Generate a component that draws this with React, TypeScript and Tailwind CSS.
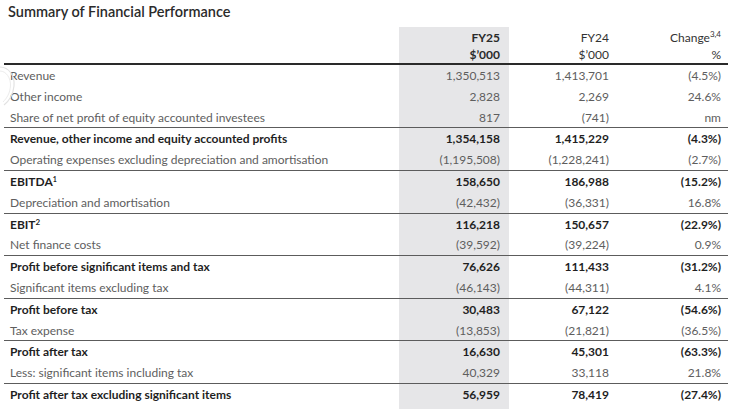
type Row = {
  label: React.ReactNode
  fy25: string
  fy24: string
  change: string
  bold?: boolean
  line?: boolean
}

const rows: Row[] = [
  { label: 'Revenue', fy25: '1,350,513', fy24: '1,413,701', change: '(4.5%)' },
  { label: 'Other income', fy25: '2,828', fy24: '2,269', change: '24.6%' },
  { label: 'Share of net profit of equity accounted investees', fy25: '817', fy24: '(741)', change: 'nm' },
  { label: 'Revenue, other income and equity accounted profits', fy25: '1,354,158', fy24: '1,415,229', change: '(4.3%)', bold: true, line: true },
  { label: 'Operating expenses excluding depreciation and amortisation', fy25: '(1,195,508)', fy24: '(1,228,241)', change: '(2.7%)' },
  { label: <>EBITDA<sup className="text-[7px] -top-[0.6em]">1</sup></>, fy25: '158,650', fy24: '186,988', change: '(15.2%)', bold: true, line: true },
  { label: 'Depreciation and amortisation', fy25: '(42,432)', fy24: '(36,331)', change: '16.8%' },
  { label: <>EBIT<sup className="text-[8px] -top-[0.45em]">2</sup></>, fy25: '116,218', fy24: '150,657', change: '(22.9%)', bold: true, line: true },
  { label: 'Net finance costs', fy25: '(39,592)', fy24: '(39,224)', change: '0.9%' },
  { label: 'Profit before significant items and tax', fy25: '76,626', fy24: '111,433', change: '(31.2%)', bold: true, line: true },
  { label: 'Significant items excluding tax', fy25: '(46,143)', fy24: '(44,311)', change: '4.1%' },
  { label: 'Profit before tax', fy25: '30,483', fy24: '67,122', change: '(54.6%)', bold: true, line: true },
  { label: 'Tax expense', fy25: '(13,853)', fy24: '(21,821)', change: '(36.5%)' },
  { label: 'Profit after tax', fy25: '16,630', fy24: '45,301', change: '(63.3%)', bold: true, line: true },
  { label: 'Less: significant items including tax', fy25: '40,329', fy24: '33,118', change: '21.8%' },
  { label: 'Profit after tax excluding significant items', fy25: '56,959', fy24: '78,419', change: '(27.4%)', bold: true, line: true },
]

export default function App() {
  return (
    <div className="relative w-[735px] h-[409px] overflow-hidden bg-white font-['Lato','Liberation_Sans',sans-serif]">
      <svg className="absolute left-0 top-[64px]" width="20" height="44" viewBox="0 0 20 44" fill="none">
        <path d="M0 3 C9 3 15 12 14 22 C13 31 9 37 4 41" stroke="#e2e2e2" strokeWidth="1.2" />
        <path d="M0 7 C6 7 11 14 10.5 22 C10 29 7 34 3 38" stroke="#ececec" strokeWidth="1" />
      </svg>

      <div className="h-[27px] pl-[8px] pt-[3px] text-[14.5px] leading-[18px] font-semibold text-[#2b2b2b]">
        Summary of Financial Performance
      </div>

      <div className="ml-[4px] w-[724px]">
        {/* header */}
        <div className="flex h-[38px] border-b-2 border-[#2a2a2a] text-[12px] leading-[17px]">
          <div className="w-[395px]" />
          <div className="w-[110px] bg-[#e6e6e8] pt-[2px] pr-[9px] text-right font-bold text-[#2a2a2a]">
            <div>FY25</div>
            <div>$’000</div>
          </div>
          <div className="w-[109px] pt-[2px] pr-[9px] text-right text-[#333]">
            <div>FY24</div>
            <div>$’000</div>
          </div>
          <div className="w-[110px] pt-[2px] pr-[7px] text-right text-[#333]">
            <div>
              Change<sup className="text-[8px] -top-[0.6em]">3,4</sup>
            </div>
            <div>%</div>
          </div>
        </div>

        {rows.map((r, i) => (
          <div
            key={i}
            className={`flex h-[20.8px] box-content text-[12px] leading-[20px] ${
              r.line ? 'border-t border-[#5c5c5c]' : ''
            } ${r.bold ? 'font-bold text-[#1f1f1f]' : 'text-[#5e5e5e]'}`}
          >
            <div className="w-[395px] pl-[6px] pt-[1px] whitespace-nowrap">{r.label}</div>
            <div className="w-[110px] bg-[#e6e6e8] pr-[9px] pt-[1px] text-right">{r.fy25}</div>
            <div className="w-[109px] pr-[9px] pt-[1px] text-right">{r.fy24}</div>
            <div className="w-[110px] pr-[7px] pt-[1px] text-right">{r.change}</div>
          </div>
        ))}

        <div className="flex h-[8px]">
          <div className="w-[395px]" />
          <div className="w-[110px] bg-[#e6e6e8]" />
        </div>
      </div>
    </div>
  )
}
